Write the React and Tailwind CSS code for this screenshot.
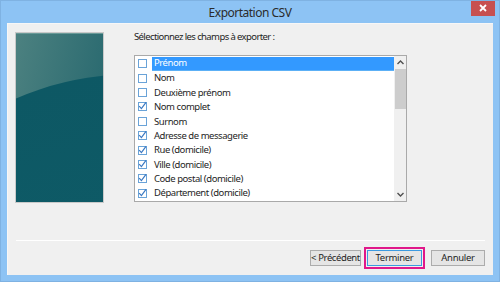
import React from "react";

const items = [
  ["Prénom", false, true],
  ["Nom", false],
  ["Deuxième prénom", false],
  ["Nom complet", true],
  ["Surnom", false],
  ["Adresse de messagerie", true],
  ["Rue (domicile)", true],
  ["Ville (domicile)", true],
  ["Code postal (domicile)", true],
  ["Département (domicile)", true],
];

function Box({ checked }) {
  return (
    <div className="w-[9px] h-[9px] border border-[#6aa3d8] bg-white flex items-center justify-center shrink-0">
      {checked && (
        <svg width="9" height="9" viewBox="0 0 9 9" className="block overflow-visible">
          <path d="M1.2 4.2 L3.4 6.6 L8 0.4" fill="none" stroke="#3a78c2" strokeWidth="1.2" />
        </svg>
      )}
    </div>
  );
}

export default function App() {
  return (
    <div
      className="w-[500px] h-[282px] bg-[#8dc3f4] border border-[#7fb2e2] flex flex-col overflow-hidden"
      style={{ fontFamily: '"Noto Sans", "Open Sans", sans-serif' }}
    >
      <div className="h-[22px] relative flex items-center justify-center shrink-0">
        <span className="text-[12px] text-[#2b2b2b] leading-none tracking-[-0.5px] mt-[1px]">Exportation CSV</span>
        <div className="absolute right-[4px] top-[-1px] w-[24px] h-[16px] bg-[#c75050] flex items-center justify-center">
          <svg width="8" height="8" viewBox="0 0 8 8">
            <path d="M1 1 L7 7 M7 1 L1 7" stroke="white" strokeWidth="1.8" />
          </svg>
        </div>
      </div>
      <div className="flex-1 mx-[6px] mb-[6px] bg-[#f0f0f0] border-t border-l border-[#f7f7f7] flex flex-col">
        <div className="flex pt-[8px] pl-[7px]">
          <div className="w-[89px] h-[171px] shrink-0 border border-[#c9c9c9]">
            <svg width="87" height="169" viewBox="0 0 87 169" className="block">
              <defs>
                <linearGradient id="g1" x1="0" y1="0" x2="1" y2="0.4">
                  <stop offset="0" stopColor="#4c8180" />
                  <stop offset="1" stopColor="#2a6a70" />
                </linearGradient>
                <linearGradient id="g2" x1="0" y1="0" x2="0.4" y2="1">
                  <stop offset="0" stopColor="#0d5763" />
                  <stop offset="0.6" stopColor="#0e5b67" />
                  <stop offset="1" stopColor="#186b77" />
                </linearGradient>
              </defs>
              <rect width="87" height="169" fill="url(#g1)" />
              <ellipse cx="120" cy="240" rx="250" ry="199" fill="url(#g2)" />
              <rect x="0" y="0" width="87" height="1" fill="#6a9a98" />
            </svg>
          </div>
          <div className="ml-[30px] flex flex-col">
            <div className="text-[9.5px] text-[#1e1e1e] leading-none mt-[0px] tracking-[-0.6px] whitespace-nowrap">
              Sélectionnez les champs à exporter :
            </div>
            <div className="mt-[13px] w-[273px] h-[147px] border border-[#a9a9a9] bg-white flex">
              <div className="flex-1 pt-[1px]">
                {items.map(([label, checked, sel]) => (
                  <div key={label} className="h-[14.4px] flex items-center pl-[3px]">
                    <Box checked={checked} />
                    <span
                      className={
                        "ml-[5px] h-[14.4px] flex items-center text-[9.5px] leading-none tracking-[-0.45px] whitespace-nowrap " +
                        (sel ? "flex-1 bg-[#3399ff] text-white pl-[2px] border-b border-[#5cb0f6]" : "text-[#1e1e1e] pl-[2px]")
                      }
                    >
                      {label}
                    </span>
                  </div>
                ))}
              </div>
              <div className="w-[12px] bg-[#f0f0f0] flex flex-col items-center">
                <div className="h-[13px] flex items-center justify-center">
                  <svg width="7" height="5" viewBox="0 0 7 5">
                    <path d="M0.5 4 L3.5 1 L6.5 4" fill="none" stroke="#505050" strokeWidth="1.4" />
                  </svg>
                </div>
                <div className="w-[11px] h-[40px] bg-[#cdcdcd]" />
                <div className="flex-1" />
                <div className="h-[13px] flex items-center justify-center">
                  <svg width="7" height="5" viewBox="0 0 7 5">
                    <path d="M0.5 1 L3.5 4 L6.5 1" fill="none" stroke="#505050" strokeWidth="1.4" />
                  </svg>
                </div>
              </div>
            </div>
          </div>
        </div>
        <div className="mt-[37px] mx-[8px] h-[1px] bg-[#a0a0a0] border-b border-[#ffffff]" />
        <div className="flex justify-end items-center mt-[6px] pr-[8px]">
          <button className="w-[51px] h-[16px] border border-[#acacac] bg-[#e5e5e5] text-[9.5px] text-[#1e1e1e] leading-none tracking-[-0.4px] whitespace-nowrap flex items-center justify-center">
            &lt; Précédent
          </button>
          <div className="ml-[3px] border-2 border-[#e0188a] p-[1px]">
            <button className="w-[55px] h-[16px] border border-[#3c9ae0] bg-[#e5e5e5] text-[9.5px] text-[#1e1e1e] leading-none tracking-[-0.3px] whitespace-nowrap flex items-center justify-center">
              Terminer
            </button>
          </div>
          <button className="ml-[6px] w-[54px] h-[16px] border border-[#acacac] bg-[#e5e5e5] text-[9.5px] text-[#1e1e1e] leading-none tracking-[-0.3px] whitespace-nowrap flex items-center justify-center">
            Annuler
          </button>
        </div>
      </div>
    </div>
  );
}
